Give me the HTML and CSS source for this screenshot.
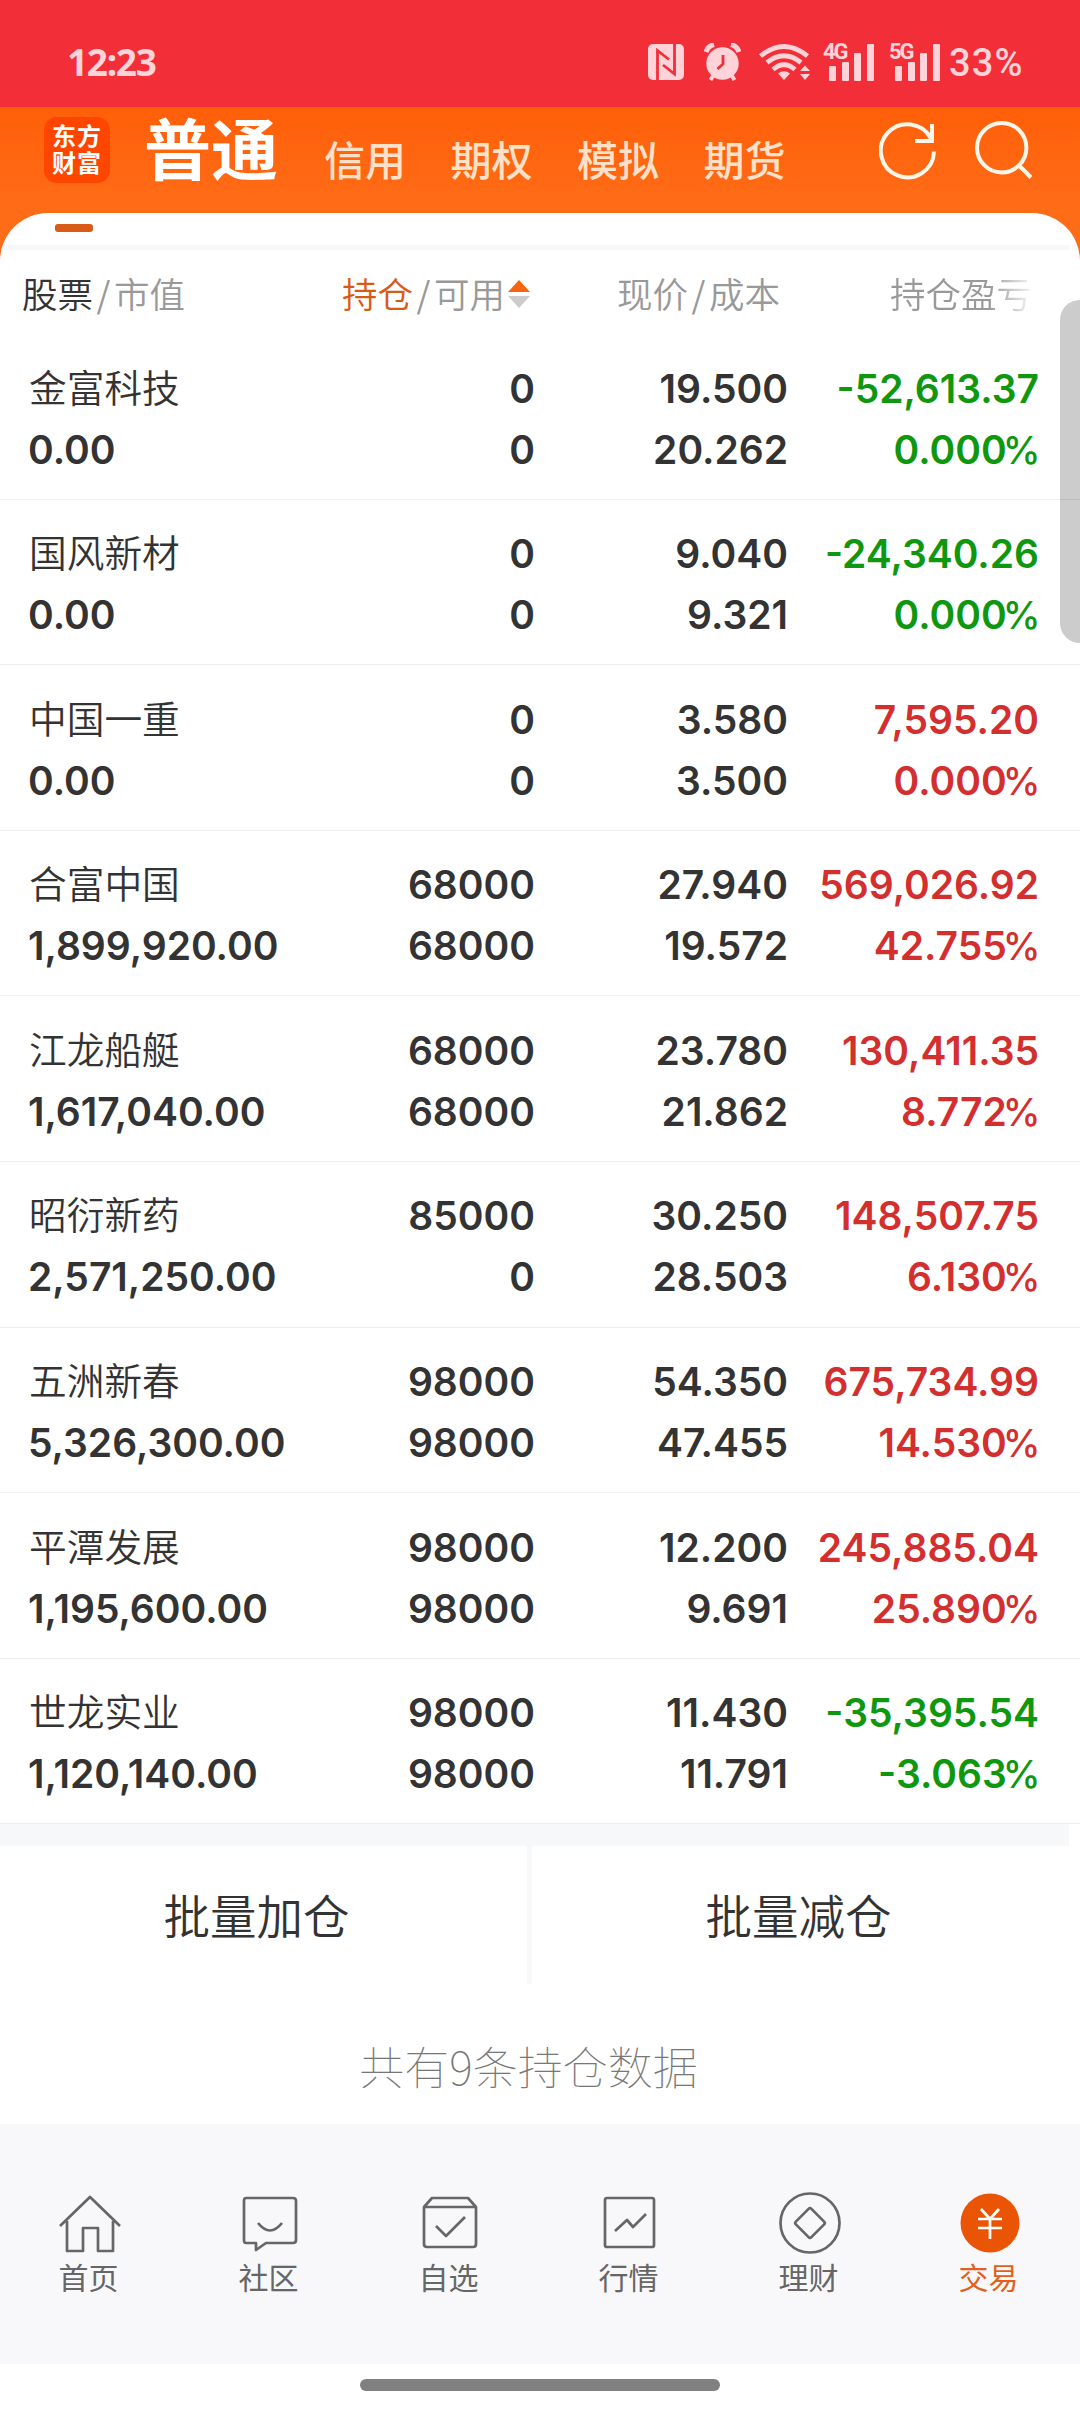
FILE: index.html
```html
<!DOCTYPE html>
<html lang="zh-CN">
<head>
<meta charset="utf-8">
<title>持仓</title>
<link rel="stylesheet" href="styles.css">
</head>
<body>
<div class="status">
  <span class="time">12:23</span>
  <div class="status-icons">
    <svg class="nfc" width="36" height="36" viewBox="0 0 36 36"><rect width="36" height="36" rx="5" fill="#ffd3d7"/><path d="M9.500 36V6.500L21 15.500M26.500 0V30L15 21" fill="none" stroke="#f22f39" stroke-width="2.800"/></svg>
    <svg class="alarm" width="37" height="38" viewBox="0 0 37 38"><circle cx="18.500" cy="20.500" r="16.200" fill="#ffd3d7"/><path d="M2 9Q4 3 10 1.500M35 9Q33 3 27 1.500" stroke="#ffd3d7" stroke-width="5" fill="none"/><path d="M9 33L6.500 37M28 33L30.500 37" stroke="#ffd3d7" stroke-width="4"/><path d="M19 12V21L13.500 26" fill="none" stroke="#f22f39" stroke-width="2.800"/></svg>
    <svg class="wifi" width="51" height="37" viewBox="0 0 51 37"><g fill="none" stroke="#ffd3d7" stroke-width="4.800"><path d="M1.500 12Q25 -7 48.500 12"/><path d="M8 18.500Q25 5 42 18.500"/><path d="M14 25.500Q25 16 36 25.500"/></g><path d="M19 29.500Q25 25 31 29.500L25 36Z" fill="#ffd3d7"/><path d="M41 27L46 21.500L51 27ZM41 30H51L46 36Z" fill="#ffd3d7"/></svg>
    <div class="signal"><span class="gen">4G</span><svg width="46" height="37" viewBox="0 0 46 37" fill="#ffd3d7"><rect y="22" width="7" height="15" rx="1"/><rect x="13" y="18" width="7" height="19" rx="1"/><rect x="25" y="9" width="7" height="28" rx="1"/><rect x="38" y="0" width="7" height="37" rx="1"/></svg></div>
    <div class="signal"><span class="gen">5G</span><svg width="46" height="37" viewBox="0 0 46 37" fill="#ffd3d7"><rect y="22" width="7" height="15" rx="1"/><rect x="13" y="18" width="7" height="19" rx="1"/><rect x="25" y="9" width="7" height="28" rx="1"/><rect x="38" y="0" width="7" height="37" rx="1"/></svg></div>
    <span class="battery">33%</span>
  </div>
</div>
<header class="top">
  <div class="logo">东方财富</div>
  <h1>普通</h1>
  <nav class="tabs"><span>信用</span><span>期权</span><span>模拟</span><span>期货</span></nav>
  <div class="actions">
    <svg width="60" height="62" viewBox="0 0 60 62" fill="none" stroke="#fff6ea" stroke-width="4"><path d="M55 31.500A26.600 26.600 0 1 1 52 18.500"/><path d="M53 4V21H36"/></svg>
    <svg width="60" height="62" viewBox="0 0 60 62" fill="none" stroke="#fff6ea" stroke-width="4"><circle cx="26.700" cy="27.700" r="24.700"/><path d="M43.500 45L56 57.500"/></svg>
  </div>
</header>
<main class="sheet">
  <div class="indicator"><i></i></div>
  <div class="band thin"></div>
  <div class="cols">
    <div class="c1"><b>股票</b><s>/</s><span>市值</span></div>
    <div class="c2"><b class="on">持仓</b><s>/</s><span>可用</span><svg width="22" height="28" viewBox="0 0 22 28"><path d="M0 12L11 0L22 12Z" fill="#f9640f"/><path d="M0 16H22L11 28Z" fill="#ccc"/></svg></div>
    <div class="c3">现价<s>/</s>成本</div>
    <div class="c4">持仓盈亏</div>
  </div>
  <section class="rows">
    <div class="row"><div><em>金富科技</em><span>0.00</span></div><div><span>0</span><span>0</span></div><div><span>19.500</span><span>20.262</span></div><div class="down"><span>-52,613.37</span><span>0.000<u>%</u></span></div></div>
    <div class="row"><div><em>国风新材</em><span>0.00</span></div><div><span>0</span><span>0</span></div><div><span>9.040</span><span>9.321</span></div><div class="down"><span>-24,340.26</span><span>0.000<u>%</u></span></div></div>
    <div class="row"><div><em>中国一重</em><span>0.00</span></div><div><span>0</span><span>0</span></div><div><span>3.580</span><span>3.500</span></div><div class="up"><span>7,595.20</span><span>0.000<u>%</u></span></div></div>
    <div class="row"><div><em>合富中国</em><span>1,899,920.00</span></div><div><span>68000</span><span>68000</span></div><div><span>27.940</span><span>19.572</span></div><div class="up"><span>569,026.92</span><span>42.755<u>%</u></span></div></div>
    <div class="row"><div><em>江龙船艇</em><span>1,617,040.00</span></div><div><span>68000</span><span>68000</span></div><div><span>23.780</span><span>21.862</span></div><div class="up"><span>130,411.35</span><span>8.772<u>%</u></span></div></div>
    <div class="row"><div><em>昭衍新药</em><span>2,571,250.00</span></div><div><span>85000</span><span>0</span></div><div><span>30.250</span><span>28.503</span></div><div class="up"><span>148,507.75</span><span>6.130<u>%</u></span></div></div>
    <div class="row"><div><em>五洲新春</em><span>5,326,300.00</span></div><div><span>98000</span><span>98000</span></div><div><span>54.350</span><span>47.455</span></div><div class="up"><span>675,734.99</span><span>14.530<u>%</u></span></div></div>
    <div class="row"><div><em>平潭发展</em><span>1,195,600.00</span></div><div><span>98000</span><span>98000</span></div><div><span>12.200</span><span>9.691</span></div><div class="up"><span>245,885.04</span><span>25.890<u>%</u></span></div></div>
    <div class="row"><div><em>世龙实业</em><span>1,120,140.00</span></div><div><span>98000</span><span>98000</span></div><div><span>11.430</span><span>11.791</span></div><div class="down"><span>-35,395.54</span><span>-3.063<u>%</u></span></div></div>
  </section>
  <div class="band"></div>
  <div class="batch"><span>批量加仓</span><i></i><span>批量减仓</span></div>
  <p class="total">共有9条持仓数据</p>
  <div class="scroll"></div>
</main>
<footer class="bar">
  <a><svg width="64" height="64" viewBox="0 0 64 64"><path d="M2 35L32 6L62 35M9 30V60H25V37H40V60H55V30"/></svg><span>首页</span></a>
  <a><svg width="64" height="64" viewBox="0 0 64 64"><path d="M8 7H55Q58 7 58 10V49Q58 52 55 52H28L18 59V52H8Q6 52 6 49V10Q6 7 8 7ZM20 32Q32 47 44 32"/></svg><span>社区</span></a>
  <a><svg width="64" height="64" viewBox="0 0 64 64"><path d="M6 16V53Q6 56 9 56H55Q58 56 58 53V16ZM6 16L14 7H50L58 16M18 35L28 45L47 26"/></svg><span>自选</span></a>
  <a><svg width="64" height="64" viewBox="0 0 64 64"><rect x="7" y="7" width="49" height="49" rx="2"/><path d="M17 40L29 29L35 36L48 23"/></svg><span>行情</span></a>
  <a><svg width="64" height="64" viewBox="0 0 64 64"><circle cx="32" cy="32" r="29.500"/><rect x="21" y="21" width="22" height="22" rx="2" transform="rotate(45 32 32)"/></svg><span>理财</span></a>
  <a class="active"><svg width="64" height="64" viewBox="0 0 64 64"><circle cx="32" cy="32" r="29.500" fill="#e95504" stroke="none"/><path d="M23 18L32 28L41 18M20 28H44M20 37H44M32 28V48" stroke="#fff"/></svg><span>交易</span></a>
</footer>
<div class="home"><i></i></div>
</body>
</html>
```
FILE: styles.css
```css
* { box-sizing: border-box; }
body { margin: 0; width: 1080px; height: 2412px; overflow: hidden; background: #fff; color: #333; font-family: Inter, "Noto Sans CJK SC", sans-serif; }
i, em, s, b, u { font-style: normal; text-decoration: none; font-weight: 400; }
svg { display: block; flex: none; }

.status { height: 107px; background: #f22f39; display: flex; justify-content: space-between; padding: 44px 54px 0 67px; color: #ffd3d7; }
.time { margin-top: -1px; font: 700 37px/37px "Noto Sans", sans-serif; letter-spacing: -1.300px; }
.status-icons { display: flex; align-items: flex-start; }
.alarm { margin: -1px 0 0 20px; }
.wifi { margin-left: 18px; }
.signal { display: flex; position: relative; width: 52px; margin-left: 13px; padding-left: 6px; }
.signal + .signal { margin-left: 14px; }
.gen { position: absolute; left: 0; top: -3px; font: 700 22px/22px Roboto, sans-serif; letter-spacing: -2px; }
.battery { width: 77px; font: 500 38px/38px Roboto, sans-serif; letter-spacing: 1.200px; margin-left: 8px; white-space: nowrap; }

.top { height: 153px; padding: 0 45px 0 44px; display: flex; align-items: flex-start; background: linear-gradient(#ff5f08, #ff6c18 65%); }
.logo { width: 66px; height: 66px; margin-top: 10px; padding: 4px 8px; border-radius: 13px; background: #ff4600; color: #fff; font: 700 24px/27px "Noto Sans CJK SC", sans-serif; letter-spacing: 1px; }
h1 { margin: 6px 0 0 34px; font: 700 67px/66px "Noto Sans CJK SC", sans-serif; color: #fff; }
.tabs { display: flex; gap: 44.500px; margin: 31px 0 0 46px; font: 500 41px/40px "Noto Sans CJK SC", sans-serif; color: #ffe0c8; }
.actions { display: flex; gap: 36px; margin: 13px 0 0 auto; }

.sheet { position: relative; height: 1911px; margin-top: -47px; border-radius: 48px 48px 0 0; background: #fff; overflow: hidden; }
.indicator { height: 32px; padding: 11px 0 0 55px; }
.indicator i { display: block; width: 38px; height: 8px; border-radius: 3px; background: #d85b18; }
.band { width: 1069px; height: 22px; background: #f7f8fa; }
.band.thin { height: 5px; }
.cols { height: 84px; padding-top: 24px; display: flex; font: 350 35.500px/37px "Noto Sans CJK SC", sans-serif; color: #999; }
.cols > div { display: flex; flex: none; }
.cols b { color: #333; font-weight: 350; }
.cols .on { color: #d85a17; }
.cols s { width: 21px; text-align: center; }
.c1 { width: 342px; padding-left: 22px; }
.c2 svg { margin: 6px 0 0 3px; }
.c2 { width: 275px; }
.c3 { width: 273px; }
.c4 { background: linear-gradient(90deg, #999 70%, #fff 103%); background-clip: text; -webkit-background-clip: text; color: transparent; }

.row { display: grid; grid-template-columns: 242px 265px 253px 251px; padding: 33.500px 0 0 28px; height: 165.600px; border-bottom: 1.500px solid #eee; }
.row > div { display: flex; flex-direction: column; gap: 20px; text-align: right; white-space: nowrap; }
.row > div:first-child { text-align: left; }
.row span { font: 600 39px/41px Inter, sans-serif; }
.row u { font-size: 38px; font-weight: 500; margin-left: -4px; letter-spacing: -1.500px; }
.row em { margin: -3px 0 3px 1px; font: 350 37.700px/41px "Noto Sans CJK SC", sans-serif; }
.up { color: #d32f2f; }
.down { color: #0f970f; }

.batch { display: flex; height: 138px; font: 350 46.500px/135px "Noto Sans CJK SC", sans-serif; text-align: center; }
.batch span { width: 527px; flex: none; padding-right: 14px; }
.batch span:last-child { width: 548px; padding: 0 15px 0 0; }
.batch i { width: 5px; background: #f7f8fa; }
.total { margin: 59px 0 0; padding-right: 23px; text-align: center; font: 100 45px/45px "Noto Sans CJK SC", sans-serif; color: #777; }
.scroll { position: absolute; right: 0; top: 87px; width: 20px; height: 343px; border-radius: 20px 0 0 20px; background: rgba(0, 0, 0, .2); }

.bar { height: 240px; padding-top: 67px; display: flex; background: #f8f8fa; }
.bar a { width: 180px; padding-right: 1px; display: flex; flex-direction: column; align-items: center; gap: 4px; font: 400 30px/34px "Noto Sans CJK SC", sans-serif; color: #666; }
.bar span { margin-right: 2px; }
.bar svg { fill: none; stroke: #666; stroke-width: 2.700; stroke-linejoin: round; }
.bar .active { color: #e06020; }
.home { height: 48px; padding: 15px 360px; }
.home i { display: block; height: 12px; border-radius: 6px; background: #808080; }
```
